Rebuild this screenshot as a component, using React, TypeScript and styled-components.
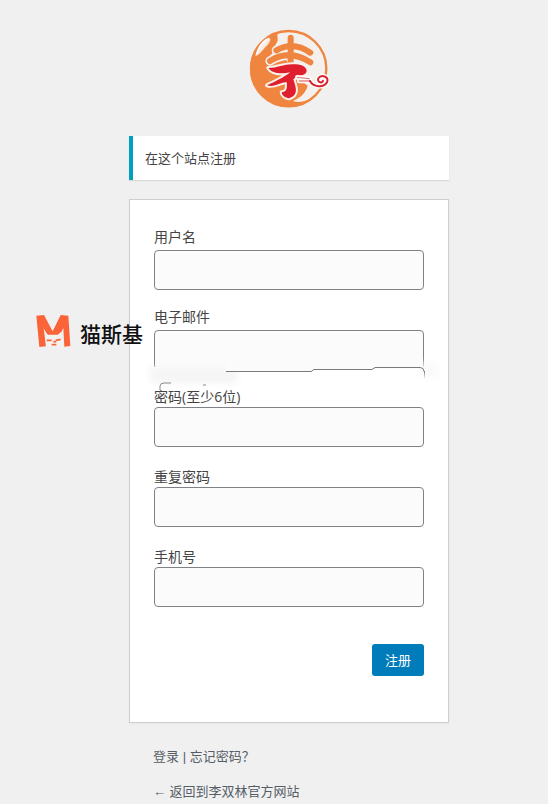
import React from "react";
import styled, { createGlobalStyle } from "styled-components";

const GlobalStyle = createGlobalStyle`
  *, *::before, *::after { box-sizing: border-box; }
  html { background: #f0f0f0; }
  body {
    margin: 0;
    color: #444;
    font-family: "Open Sans", "Noto Sans CJK SC", sans-serif;
    font-size: 13px;
    line-height: 20px;
    font-weight: 400;
  }
`;

const Page = styled.main`
  display: flex;
  justify-content: center;
  padding: 20px 0 0 30px;
  overflow: hidden;
`;

const Panel = styled.div`
  position: relative;
  width: 100%;
  max-width: 320px;
`;

const LogoLink = styled.a`
  display: block;
  width: 100px;
  height: 96px;
  margin: 0 auto 20px;
`;

const Notice = styled.p`
  margin: 0 0 19px;
  padding: 12px;
  border-left: 4px solid #00a0c0;
  background: #fff;
  box-shadow: 0 1px 1px rgba(0, 0, 0, 0.1);
`;

const Form = styled.form`
  padding: 27px 24px 46px;
  border: 1px solid #ccd0d4;
  background: #fff;
  box-shadow: 0 1px 3px rgba(0, 0, 0, 0.04);
`;

const Field = styled.div<{ $gap: number }>`
  position: relative;
  display: flex;
  flex-direction: column;
  gap: ${(p) => p.$gap}px;
  min-height: 80px;
`;

const Label = styled.label`
  font-size: 14px;
  line-height: 20px;
  position: relative;
  z-index: 2;
`;

const Input = styled.input`
  width: 100%;
  height: 40px;
  padding: 3px 5px;
  border: 1px solid #7e8286;
  border-radius: 4px;
  background: #fbfbfb;
  font: inherit;
  font-size: 24px;
`;

const Smudge = styled.svg`
  position: absolute;
  z-index: 1;
  top: 50px;
  left: -14px;
  pointer-events: none;
`;

const Actions = styled.div`
  display: flex;
  justify-content: flex-end;
  margin-top: 17px;
`;

const Submit = styled.button`
  height: 32px;
  padding: 0 13px;
  border: 0;
  border-radius: 3px;
  background: #007cba;
  color: #fff;
  font: inherit;
`;

const Links = styled.p`
  margin: 0;
  padding: 24px 24px 0;
  color: #555d66;
  font-family: "Liberation Sans", "Noto Sans CJK SC", sans-serif;
  & + & { padding-top: 15px; }
`;

const TextLink = styled.a`
  color: #555d66;
  text-decoration: none;
`;

const Watermark = styled.div`
  position: absolute;
  z-index: 3;
  top: 290px;
  left: -97px;
  display: flex;
  align-items: flex-end;
  gap: 4px;
  color: #111;
  font-size: 21px;
  font-weight: 500;
  line-height: 36px;
  white-space: nowrap;
`;

const Logo = () => (
  <svg width="100" height="96" viewBox="3 0 300 288" fill="none" aria-hidden="true">
    <defs>
      <linearGradient id="shine" x1="0" y1="0" x2="1" y2="1">
        <stop offset="0" stopColor="#fff" stopOpacity=".4" />
        <stop offset="0.4" stopColor="#fff" />
        <stop offset="1" stopColor="#fff" stopOpacity=".2" />
      </linearGradient>
    </defs>
    <circle cx="152" cy="146" r="113" fill="#f3f0ed" />
    <path d="M118 38C70 50 36 92 37 146c0 62 50 113 114 113 26 0 46-8 60-20-20 8-34 8-46 4 22-10 38-24 44-46l-28-22-40-60-45 10-6-12 20-20-3-8 12-22Z" fill="#f0853f" />
    <circle cx="152" cy="146" r="113" stroke="#f0853f" strokeWidth="7" />
    <path d="M52 108C57 84 72 58 92 53c12 2 0 20-12 31-10 11-18 23-28 24Z" fill="url(#shine)" />
    <path d="M115 91Q165 62 217 98M96 123Q155 86 217 127" stroke="#f3f0ed" strokeWidth="28" strokeLinecap="round" />
    <path d="M158 53v72M115 91Q165 62 217 98M96 123Q155 86 217 127" stroke="#f0853f" strokeWidth="18" strokeLinecap="round" />
    <path d="M91 144c28 0 50-13 76-11 24-3 44 11 38 24-6 12-28 10-39 21 7 22 18 48-13 57-12-1-21-9-22-18 14 0 18-12 15-30-19-2-33 16-59 9 20-9 50-23 70-39-24 5-54 5-66-13Z" stroke="#faf0eb" strokeWidth="12" strokeLinejoin="round" fill="#df1f2d" />
    <path d="M91 144c28 0 50-13 76-11 24-3 44 11 38 24-6 12-28 10-39 21 7 22 18 48-13 57-12-1-21-9-22-18 14 0 18-12 15-30-19-2-33 16-59 9 20-9 50-23 70-39-24 5-54 5-66-13Z" fill="#df1f2d" />
    <path d="M178 172l36 4M184 183h32c9 18 41 22 51 4 7-17-17-26-26-12-5 11 11 17 14 7" stroke="#fff" strokeWidth="14" strokeLinecap="round" />
    <path d="M178 172l36 4M184 183h32" stroke="#e78583" strokeWidth="4" strokeLinecap="round" />
    <path d="M216 183c9 18 41 22 51 4 7-17-17-26-26-12-5 11 11 17 14 7" stroke="#d9232e" strokeWidth="6" strokeLinecap="round" />
  </svg>
);

const CatMark = () => (
  <svg width="44" height="42" viewBox="0 0 132 126" fill="none" aria-hidden="true">
    <path d="M13 17l23-2 26 49L86 15l23 2 6 91-18 2-3-56-10 20H46L35 55l7 54-20 2Z" fill="#fb6438" />
    <path d="M39 65l10 11h27l12-11 4 44H42Z" fill="#f4f2f1" />
    <path d="M44 91h15M71 91l15-3M64 95h9M59 104h14" stroke="#fb6438" strokeWidth="5" />
  </svg>
);

const SmearedEdge = () => (
  <Smudge width="310" height="36" viewBox="0 0 310 36" fill="none" aria-hidden="true">
    <defs>
      <filter id="soft" x="-20%" y="-60%" width="140%" height="220%">
        <feGaussianBlur stdDeviation="3" />
      </filter>
      <linearGradient id="fade" x1="0" y1="0" x2="0" y2="1">
        <stop offset="0" stopColor="#777" />
        <stop offset="1" stopColor="#777" stopOpacity="0" />
      </linearGradient>
    </defs>
    <path d="M13 10h272v12H13Z" fill="#fff" />
    <path d="M10 10h88v16H10Z" fill="#f5f5f5" filter="url(#soft)" />
    <path d="M86 4h197v8h-112v2H86Z" fill="#fbfbfb" />
    <path d="M280 6h18v14h-18Z" fill="#fafafa" filter="url(#soft)" />
    <path d="M86 14.500h85l3-2h58l3-2h45q4 0 4 4" stroke="#777b7e" />
    <path d="M284 14h1v8h-1Z" fill="url(#fade)" />
    <path d="M20 33v-4q0-3 4-3h7M63 28h3" stroke="#888" />
  </Smudge>
);

const fields = [
  { id: "user", label: "用户名", type: "text", gap: 3 },
  { id: "email", label: "电子邮件", type: "email", gap: 3, smeared: true },
  { id: "password", label: "密码(至少6位)", type: "password", gap: 0 },
  { id: "repeat", label: "重复密码", type: "password", gap: 0 },
  { id: "phone", label: "手机号", type: "tel", gap: 0 },
];

export default function App() {
  return (
    <>
      <GlobalStyle />
      <Page>
        <Panel>
          <LogoLink href="#" aria-label="李双林官方网站">
            <Logo />
          </LogoLink>
          <Notice>在这个站点注册</Notice>
          <Form onSubmit={(e) => e.preventDefault()}>
            {fields.map((f) => (
              <Field key={f.id} $gap={f.gap}>
                <Label htmlFor={f.id}>{f.label}</Label>
                <Input id={f.id} type={f.type} />
                {f.smeared && <SmearedEdge />}
              </Field>
            ))}
            <Actions>
              <Submit type="submit">注册</Submit>
            </Actions>
          </Form>
          <Links>
            <TextLink href="#login">登录</TextLink> | <TextLink href="#lost">忘记密码？</TextLink>
          </Links>
          <Links>
            <TextLink href="#home">← 返回到李双林官方网站</TextLink>
          </Links>
          <Watermark>
            <CatMark />
            <span>猫斯基</span>
          </Watermark>
        </Panel>
      </Page>
    </>
  );
}
